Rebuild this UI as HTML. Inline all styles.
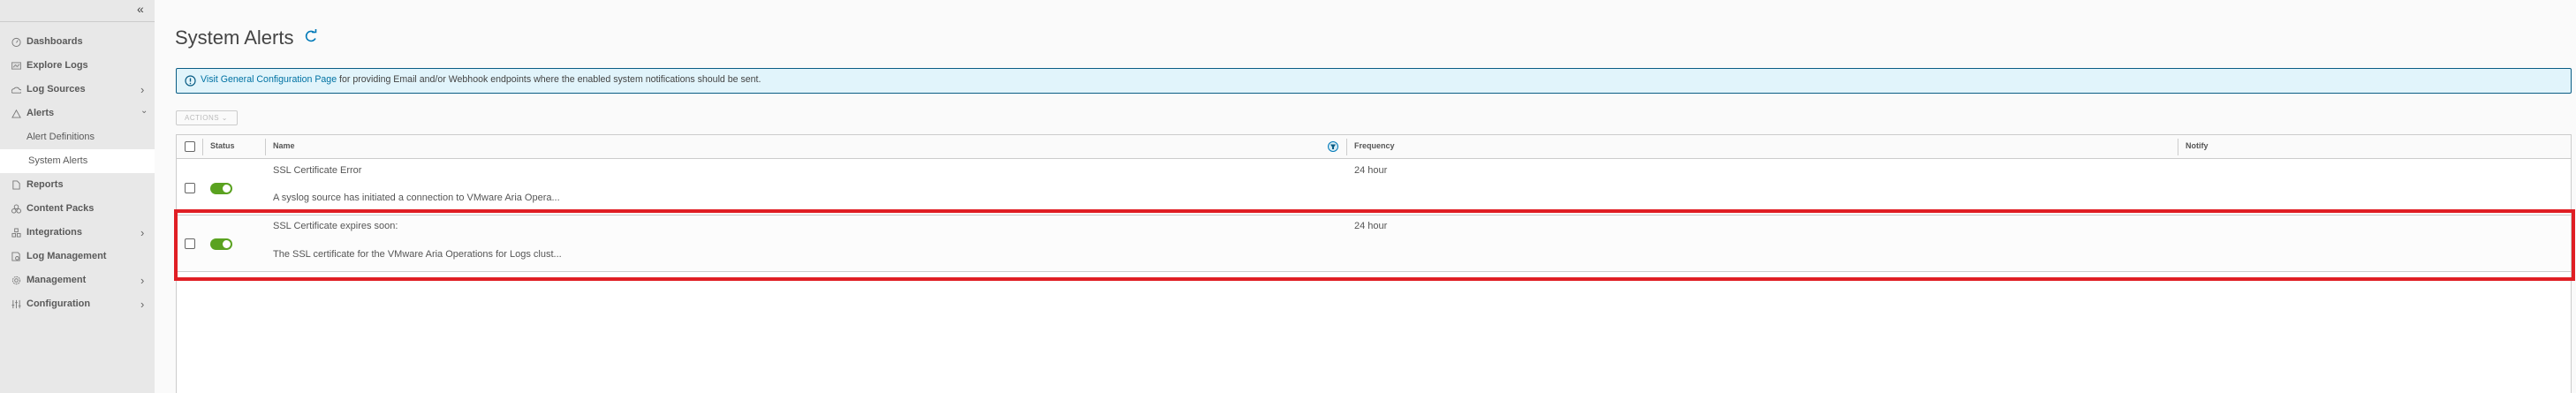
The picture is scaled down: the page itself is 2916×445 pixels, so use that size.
<!DOCTYPE html>
<html><head><meta charset="utf-8"><style>
*{box-sizing:border-box;margin:0;padding:0}
body{width:2916px;height:445px;overflow:hidden;background:#fafafa;font-family:"Liberation Sans",sans-serif;color:#565656;position:relative}
.sb{position:absolute;left:0;top:0;width:175px;height:445px;background:#e8e8e8}
.sbtop{position:absolute;left:0;top:24px;width:175px;height:1px;background:#ccc}
.ni{position:absolute;left:0;width:175px;height:27px;font-size:11px;line-height:27px;color:#5a5a5a;font-weight:bold}
.ni .t{position:absolute;left:30px}
.ni .ic{position:absolute;left:13px;top:8px;width:11px;height:11px}
.ni .ch{position:absolute;left:159px;top:0;font-weight:normal;color:#666;font-size:13px}
.abs{position:absolute}
.hd{font-size:9px;font-weight:bold;color:#555}
.txt{font-size:11px;color:#555}
.cb{position:absolute;width:12px;height:12px;border:1px solid #666;border-radius:2px;background:#fff}
.tg{position:absolute;width:25px;height:13px;border-radius:7px;background:#5aa220}
.tg:after{content:"";position:absolute;right:2px;top:2px;width:9px;height:9px;border-radius:50%;background:#fff}
</style></head><body>
<div class="sb">
<div class="abs" style="left:155px;top:2px;font-size:14px;color:#444">«</div>
<div class="sbtop"></div>
<div class="ni" style="top:34px"><svg class="ic" viewBox="0 0 12 12"><circle cx="6" cy="6.5" r="5" fill="none" stroke="#777"/><path d="M6 7l2-3" stroke="#777"/></svg><span class="t">Dashboards</span></div>
<div class="ni" style="top:61px"><svg class="ic" viewBox="0 0 12 12"><rect x="0.5" y="2" width="11" height="8" fill="#ddd" stroke="#888"/><path d="M2 8l3-3 2 2 3-3" fill="none" stroke="#888"/></svg><span class="t">Explore Logs</span></div>
<div class="ni" style="top:88px"><svg class="ic" viewBox="0 0 12 12"><path d="M1 10h10a2 2 0 0 0-1-4 4 4 0 0 0-7-1 3 3 0 0 0-2 5z" fill="none" stroke="#777"/></svg><span class="t">Log Sources</span><span class="ch">›</span></div>
<div class="ni" style="top:115px"><svg class="ic" viewBox="0 0 12 12"><path d="M6 2l5 9H1z" fill="none" stroke="#777"/></svg><span class="t">Alerts</span><span class="ch" style="font-size:10px;top:-3px">⌄</span></div>
<div class="ni" style="top:142px"><span class="t" style="font-weight:normal">Alert Definitions</span></div>
<div class="ni" style="top:169px;background:#fff"><span class="t" style="left:32px;font-weight:normal">System Alerts</span></div>
<div class="ni" style="top:196px"><svg class="ic" viewBox="0 0 12 12"><path d="M2 1h5l3 3v7H2z" fill="none" stroke="#777"/></svg><span class="t">Reports</span></div>
<div class="ni" style="top:223px"><svg class="ic" viewBox="0 0 12 12"><circle cx="6" cy="3.5" r="2.5" fill="none" stroke="#777"/><circle cx="3" cy="8.5" r="2.5" fill="none" stroke="#777"/><circle cx="9" cy="8.5" r="2.5" fill="none" stroke="#777"/></svg><span class="t">Content Packs</span></div>
<div class="ni" style="top:250px"><svg class="ic" viewBox="0 0 12 12"><rect x="4" y="1" width="4" height="4" fill="none" stroke="#777"/><rect x="1" y="7" width="4" height="4" fill="none" stroke="#777"/><rect x="7" y="7" width="4" height="4" fill="none" stroke="#777"/></svg><span class="t">Integrations</span><span class="ch">›</span></div>
<div class="ni" style="top:277px"><svg class="ic" viewBox="0 0 12 12"><path d="M1 1h7l2 2v8H1z" fill="none" stroke="#777"/><circle cx="7" cy="8" r="2" fill="none" stroke="#777"/></svg><span class="t">Log Management</span></div>
<div class="ni" style="top:304px"><svg class="ic" viewBox="0 0 12 12"><circle cx="6" cy="6" r="4.5" fill="none" stroke="#777" stroke-dasharray="2 1"/><circle cx="6" cy="6" r="2" fill="none" stroke="#777"/></svg><span class="t">Management</span><span class="ch">›</span></div>
<div class="ni" style="top:331px"><svg class="ic" viewBox="0 0 12 12"><path d="M2 1v10M6 1v10M10 1v10" stroke="#777"/><path d="M0.5 7h3M4.5 4h3M8.5 8h3" stroke="#777"/></svg><span class="t">Configuration</span><span class="ch">›</span></div>
</div>

<div class="abs" style="left:198px;top:30px;font-size:22px;color:#444">System Alerts</div>
<svg class="abs" style="left:345px;top:33px" width="15" height="16" viewBox="0 0 15 16"><path d="M12 10.5A5.5 5.5 0 1 1 11 4" fill="none" stroke="#0079b8" stroke-width="1.6"/><path d="M8 3.5h4.5V0" fill="none" stroke="#0079b8" stroke-width="1.6"/></svg>

<div class="abs" style="left:199px;top:77px;width:2712px;height:29px;background:#e1f4fb;border:1px solid #0a5d85;border-radius:2px"></div>
<svg class="abs" style="left:209px;top:85px" width="13" height="13" viewBox="0 0 13 13"><circle cx="6.5" cy="6.5" r="5.5" fill="none" stroke="#0a5d85" stroke-width="1.2"/><path d="M6.5 3.5v4" stroke="#0a5d85" stroke-width="1.4"/><circle cx="6.5" cy="9.5" r=".8" fill="#0a5d85"/></svg>
<div class="abs txt" style="left:227px;top:84px;font-size:10.6px;color:#444"><span style="color:#0072a3">Visit General Configuration Page</span> for providing Email and/or Webhook endpoints where the enabled system notifications should be sent.</div>

<div class="abs" style="left:199px;top:125px;width:70px;height:17px;border:1px solid #ccc;border-radius:2px;font-size:8px;color:#bbb;line-height:15px;padding-left:9px;letter-spacing:.5px">ACTIONS ⌄</div>

<div class="abs" style="left:199px;top:152px;width:2712px;height:293px;background:#fff;border:1px solid #ccc;border-bottom:none"></div>
<div class="abs" style="left:200px;top:153px;width:2710px;height:27px;background:#fafafa;border-bottom:1px solid #ccc"></div>
<div class="cb" style="left:209px;top:160px"></div>
<div class="abs" style="left:229px;top:157px;width:1px;height:19px;background:#ccc"></div>
<div class="abs hd" style="left:238px;top:160px">Status</div>
<div class="abs" style="left:300px;top:157px;width:1px;height:19px;background:#ccc"></div>
<div class="abs hd" style="left:309px;top:160px">Name</div>
<svg class="abs" style="left:1503px;top:160px" width="12" height="12" viewBox="0 0 12 12"><circle cx="6" cy="6" r="5.5" fill="#d8ecf5" stroke="#0079b8"/><path d="M3 3.5h6L7 6.5V9H5V6.5z" fill="#0a5d85"/></svg>
<div class="abs" style="left:1524px;top:157px;width:1px;height:19px;background:#ccc"></div>
<div class="abs hd" style="left:1533px;top:160px">Frequency</div>
<div class="abs" style="left:2465px;top:157px;width:1px;height:19px;background:#ccc"></div>
<div class="abs hd" style="left:2474px;top:160px">Notify</div>

<div class="abs txt" style="left:309px;top:187px">SSL Certificate Error</div>
<div class="abs txt" style="left:309px;top:218px">A syslog source has initiated a connection to VMware Aria Opera...</div>
<div class="abs txt" style="left:1533px;top:187px">24 hour</div>
<div class="cb" style="left:209px;top:207px"></div>
<div class="tg" style="left:238px;top:207px"></div>

<div class="abs" style="left:200px;top:243px;width:2710px;height:65px;background:#fcfcfc;border-top:1px solid #ccc;border-bottom:1px solid #ccc"></div>
<div class="abs txt" style="left:309px;top:250px">SSL Certificate expires soon:</div>
<div class="abs txt" style="left:309px;top:282px">The SSL certificate for the VMware Aria Operations for Logs clust...</div>
<div class="abs txt" style="left:1533px;top:250px">24 hour</div>
<div class="cb" style="left:209px;top:270px"></div>
<div class="tg" style="left:238px;top:270px"></div>

<div class="abs" style="left:197px;top:237px;width:2718px;height:81px;border:4px solid #e01e24"></div>
</body></html>
